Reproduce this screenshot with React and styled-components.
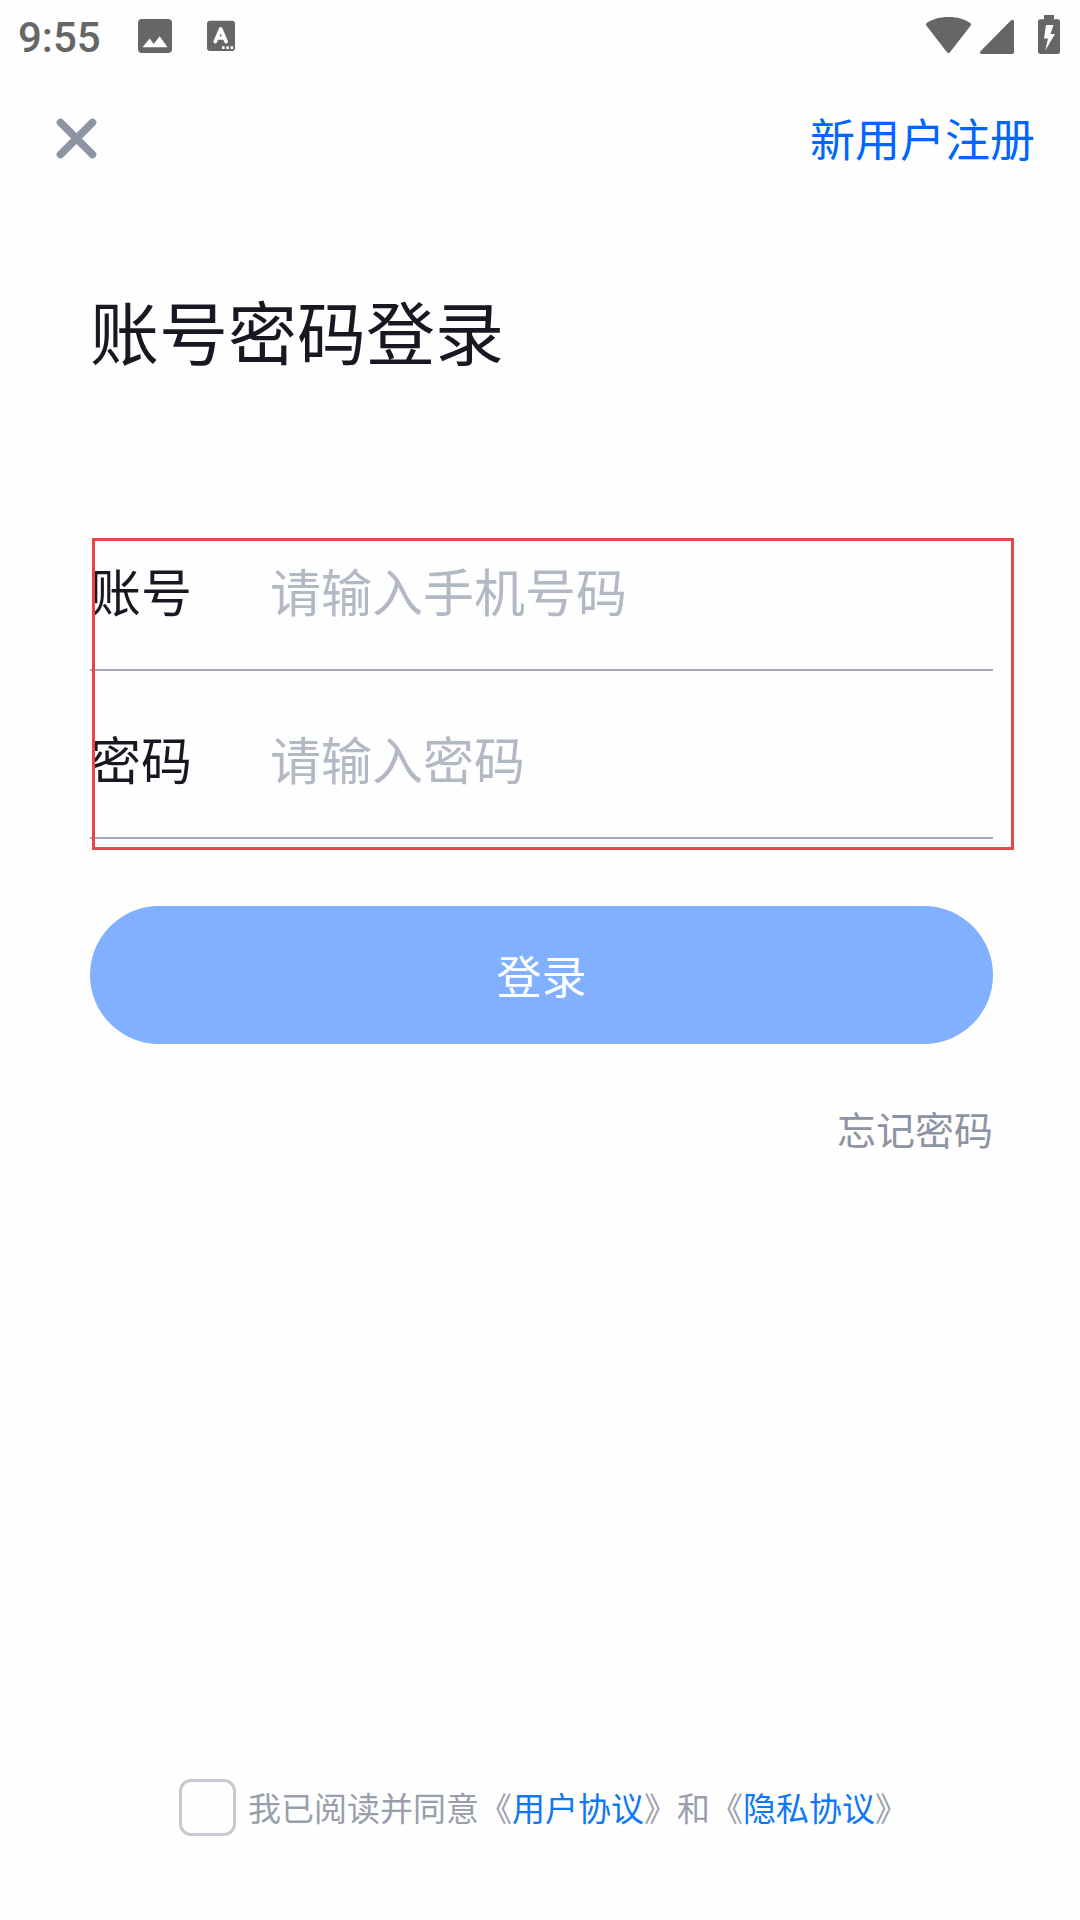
import React, { useState } from 'react';
import styled, { createGlobalStyle } from 'styled-components';


const GlobalStyle = createGlobalStyle`
  * {
    box-sizing: border-box;
  }
  body {
    margin: 0;
    background: #fefefe;
    font-family: "Noto Sans CJK SC", sans-serif;
  }
`

const Screen = styled.div`
  display: flex;
  flex-direction: column;
  width: 1080px;
  height: 1920px;
  background: #fefefe;
  overflow: hidden;
`
const StatusBar = styled.div`
  display: flex;
  align-items: center;
  justify-content: space-between;
  height: 72px;
  padding: 0 20px 0 18px;
`
const StatusGroup = styled.div`
  display: flex;
  align-items: center;
`
const Clock = styled.span`
  width: 120px;
  padding-top: 3px;
  font-family: Roboto, sans-serif;
  font-size: 42px;
  font-weight: 500;
  line-height: 72px;
  color: #666666;
`
const StatusIcon = styled.svg`
  display: block;
  width: ${props => props.$width}px;
  height: 72px;
  margin-left: ${props => props.$gap || 0}px;
  fill: #666666;
`
const NavBar = styled.div`
  display: flex;
  align-items: center;
  justify-content: space-between;
  height: 132px;
  padding: 0 45px 0 56px;
`
const PlainButton = styled.button`
  display: block;
  padding: 0;
  border: none;
  background: none;
  font-family: inherit;
`
const CloseIcon = styled.svg`
  display: block;
  width: 41px;
  height: 41px;
  fill: none;
  stroke: #8d95a5;
  stroke-width: 7.6;
  stroke-linecap: round;
`
const RegisterLink = styled(PlainButton)`
  font-size: 45px;
  line-height: 66px;
  color: #0066ff;
`
const Content = styled.div`
  display: flex;
  flex-direction: column;
  padding: 0 87px 0 90px;
`
const Title = styled.h1`
  margin: 76px 0 0;
  font-size: 69px;
  font-weight: 400;
  line-height: 100px;
  color: #191822;
`
const Form = styled.div`
  position: relative;
  margin-top: 123px;
`
const Highlight = styled.div`
  position: absolute;
  left: 2px;
  top: 35px;
  width: 922px;
  height: 312px;
  border: 3px solid #e2484c;
  pointer-events: none;
`
const Field = styled.label`
  display: flex;
  align-items: center;
  height: 168px;
  padding-top: 7px;
  border-bottom: 2px solid #a3a8b5;
`
const FieldLabel = styled.span`
  width: 180px;
  font-size: 51px;
  line-height: 74px;
  color: #191822;
`
const FieldInput = styled.input`
  flex: 1;
  min-width: 0;
  height: 74px;
  padding: 0;
  border: none;
  outline: none;
  background: none;
  font-family: inherit;
  font-size: 51px;
  color: #191822;
  &::placeholder {
    color: #b3b8c5;
    opacity: 1;
  }
`
const LoginButton = styled(PlainButton)`
  height: 138px;
  margin-top: 67px;
  padding-bottom: 2px;
  border-radius: 69px;
  background: #80b0ff;
  font-size: 45px;
  color: #ffffff;
`
const ForgotLink = styled(PlainButton)`
  align-self: flex-end;
  margin-top: 55px;
  font-size: 39px;
  line-height: 58px;
  color: #8e93a3;
`
const Agreement = styled.div`
  display: flex;
  align-items: center;
  height: 58px;
  margin: auto 0 84px;
  padding-left: 179px;
`
const Checkbox = styled.input`
  appearance: none;
  width: 57px;
  height: 57px;
  margin: 0 12px 0 0;
  border: 3px solid #c7cad3;
  border-radius: 12px;
`
const AgreementText = styled.span`
  font-size: 33px;
  line-height: 48px;
  white-space: nowrap;
  color: #999eac;
`
const PolicyLink = styled.span`
  color: #0f78f5;
`

const fields = [
  { name: 'account', label: '账号', placeholder: '请输入手机号码', type: 'text' },
  { name: 'password', label: '密码', placeholder: '请输入密码', type: 'password' },
]

export default function App() {
  const [values, setValues] = useState({ account: '', password: '' });

  const handleChange = (e) => {
    const { name, value } = e.currentTarget;
    setValues({ ...values, [name]: value });
  }

  return (
    <Screen>
      <GlobalStyle />
      <StatusBar>
        <StatusGroup>
          <Clock>9:55</Clock>
          <StatusIcon $width={34} viewBox='138 0 34 72'>
            <path fillRule='evenodd' d='M142 19h26a4 4 0 0 1 4 4v26a4 4 0 0 1-4 4h-26a4 4 0 0 1-4-4V23a4 4 0 0 1 4-4zM142.5 47.3h25L159.7 36.3l-6 7.6-4-5.4z' />
          </StatusIcon>
          <StatusIcon $width={28} $gap={35} viewBox='207 0 28 72'>
            <path d='M210 20.7h22a3 3 0 0 1 3 3V48a3 3 0 0 1-3 3h-22a3 3 0 0 1-3-3V23.7a3 3 0 0 1 3-3z' />
            <path d='M215.3 41.5L220.7 29l5.4 12.5M217.5 38h6.5' fill='none' stroke='#fefefe' strokeWidth='3.7' strokeLinecap='round' strokeLinejoin='round' />
            <path d='M222 46.3h2.6v2.6H222zM226.3 46.3h2.6v2.6h-2.6zM230.6 46.3h2.6v2.6h-2.6z' fill='#fefefe' />
          </StatusIcon>
        </StatusGroup>
        <StatusGroup>
          <StatusIcon $width={46} viewBox='925 0 46 72'>
            <path d='M926.3 25.5C925.5 24.7 925.7 23.9 926.5 23.2C932 19 940 17 948.5 17S965 19 970.5 23.2C971.3 23.9 971.5 24.7 970.7 25.5L950 52.2C949 53.3 948 53.3 947 52.2z' />
          </StatusIcon>
          <StatusIcon $width={34} $gap={9} viewBox='980 0 34 72'>
            <path d='M1014 21.5V52a2 2 0 0 1-2 2H981.5C980 54 979.5 52.5 980.5 51.3L1010.8 20.5C1012 19.3 1014 19.8 1014 21.5z' />
          </StatusIcon>
          <StatusIcon $width={22} $gap={24} viewBox='1038 0 22 72'>
            <path fillRule='evenodd' d='M1044 15h10v4.3h3.7a2.3 2.3 0 0 1 2.3 2.3V51.7a2.3 2.3 0 0 1-2.3 2.3h-17.4a2.3 2.3 0 0 1-2.3-2.3V21.6a2.3 2.3 0 0 1 2.3-2.3H1044zM1046 25L1044 38.5H1048L1045.3 50.5L1055 34H1050.5L1053.5 25z' />
          </StatusIcon>
        </StatusGroup>
      </StatusBar>
      <NavBar>
        <PlainButton aria-label='关闭'>
          <CloseIcon viewBox='0 0 41 41'>
            <path d='M4.5 4.5l32 32M36.5 4.5l-32 32' />
          </CloseIcon>
        </PlainButton>
        <RegisterLink>新用户注册</RegisterLink>
      </NavBar>
      <Content>
        <Title>账号密码登录</Title>
        <Form>
          {fields.map(({ name, label, placeholder, type }) => (
            <Field key={`field-${name}`}>
              <FieldLabel>{label}</FieldLabel>
              <FieldInput
                name={name}
                type={type}
                placeholder={placeholder}
                onChange={handleChange}
                value={values[name]}>
              </FieldInput>
            </Field>
          ))}
          <Highlight />
        </Form>
        <LoginButton>登录</LoginButton>
        <ForgotLink>忘记密码</ForgotLink>
      </Content>
      <Agreement>
        <Checkbox type='checkbox' />
        <AgreementText>
          我已阅读并同意《<PolicyLink>用户协议</PolicyLink>》和《<PolicyLink>隐私协议</PolicyLink>》
        </AgreementText>
      </Agreement>
    </Screen>
  )
}
